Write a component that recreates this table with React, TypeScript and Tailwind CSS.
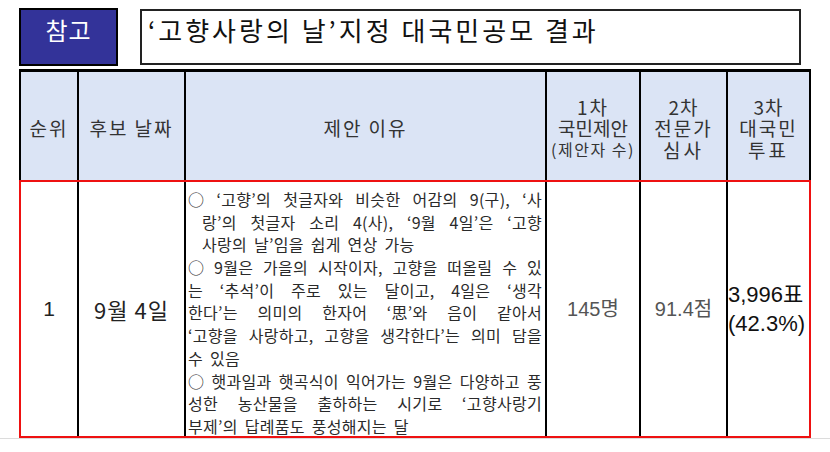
const kr = "font-['Noto_Sans_CJK_KR','Noto_Sans',sans-serif]";
const num = "font-['Liberation_Sans','Noto_Sans_CJK_KR',sans-serif]";

type L = { t: string; indent?: boolean; just?: boolean };

const lines: L[] = [
  { t: "○ ‘고향’의 첫글자와 비슷한 어감의 9(구), ‘사", just: true },
  { t: "랑’의 첫글자 소리 4(사), ‘9월 4일’은 ‘고향", indent: true, just: true },
  { t: "사랑의 날’임을 쉽게 연상 가능", indent: true },
  { t: "○ 9월은 가을의 시작이자, 고향을 떠올릴 수 있", just: true },
  { t: "는 ‘추석’이 주로 있는 달이고, 4일은 ‘생각", just: true },
  { t: "한다’는 의미의 한자어 ‘思’와 음이 같아서", just: true },
  { t: "‘고향을 사랑하고, 고향을 생각한다’는 의미 담을", just: true },
  { t: "수 있음" },
  { t: "○ 햇과일과 햇곡식이 익어가는 9월은 다양하고 풍", just: true },
  { t: "성한 농산물을 출하하는 시기로 ‘고향사랑기", just: true },
  { t: "부제’의 답례품도 풍성해지는 달" },
];

function Line({ t, indent, just }: L) {
  const words = t.split(" ");
  return (
    <div className={`h-[22.7px] leading-[22.7px] whitespace-nowrap tracking-[0.3px] ${indent ? "pl-[14px]" : ""} ${just ? "flex justify-between" : "[word-spacing:3px]"}`}>
      {just ? words.map((w, i) => <span key={i}>{w}</span>) : t}
    </div>
  );
}

export default function App() {
  return (
    <div className={`w-[830px] h-[452px] bg-white overflow-hidden ${kr}`}>
      <div className="flex pt-[8px] pl-[19px] gap-[22px] h-[69px]">
        <div className="w-[99px] h-[58px] bg-[#333399] border-2 border-black text-white text-[24px] leading-none flex justify-center pt-[8px] tracking-[1px]">
          참고
        </div>
        <div className="w-[661px] h-[56px] mt-[1px] border-2 border-[#222] text-[26px] leading-none pl-[6px] pt-[6px] text-[#111] tracking-[3px]">
          ‘고향사랑의 날’지정 대국민공모 결과
        </div>
      </div>

      <div className="ml-[19px] w-[792px]">
        <div className="flex h-[111px] border-t-[3px] border-black bg-[#dbe4f5] text-[#333] text-[19px] leading-[21.5px] text-center">
          <div className="w-[60px] border-l-2 border-r-2 border-black flex items-center justify-center tracking-[2px] pt-[4px]">순위</div>
          <div className="w-[107px] border-r-2 border-black flex items-center justify-center tracking-[2px] pt-[4px]">후보 날짜</div>
          <div className="w-[361px] border-r-2 border-black flex items-center justify-center tracking-[2px] pt-[4px]">제안 이유</div>
          <div className="w-[94px] border-r-2 border-black flex flex-col items-center justify-center pt-[4px]">
            <span className="tracking-[2px]">1차</span>
            <span>국민제안</span>
            <span className="text-[16px] tracking-[1.5px] whitespace-nowrap">(제안자 수)</span>
          </div>
          <div className="w-[87px] border-r-2 border-black flex flex-col items-center justify-center pt-[4px]">
            <span className="tracking-[1px]">2차</span>
            <span className="tracking-[2px]">전문가</span>
            <span className="tracking-[3px]">심사</span>
          </div>
          <div className="w-[83px] border-r-2 border-black flex flex-col items-center justify-center pt-[4px]">
            <span className="tracking-[1px]">3차</span>
            <span className="tracking-[2px]">대국민</span>
            <span className="tracking-[3px]">투표</span>
          </div>
        </div>

        <div className="flex h-[258px] border-y-2 border-[#ee1111]">
          <div className={`w-[60px] border-l-2 border-l-[#ee1111] border-r-2 border-black flex items-center justify-center text-[21px] text-[#222] ${num}`}>1</div>
          <div className="w-[107px] border-r-2 border-black flex items-center justify-center text-[22px] text-[#222] tracking-[1px]">9월 4일</div>
          <div className="w-[361px] border-r-2 border-black pl-[2px] pr-[3px] pt-[6px] text-[16px] text-[#2a2a2a]">
            {lines.map((l, i) => (
              <Line key={i} {...l} />
            ))}
          </div>
          <div className={`w-[94px] border-r-2 border-black flex items-center justify-center text-[20px] text-[#555] ${num}`}>145명</div>
          <div className={`w-[87px] border-r-2 border-black flex items-center justify-center text-[20px] text-[#555] ${num}`}>91.4점</div>
          <div className={`w-[83px] border-r-2 border-[#ee1111] flex flex-col justify-center text-[22px] leading-[29px] text-[#111] whitespace-nowrap ${num}`}>
            <span>3,996표</span>
            <span>(42.3%)</span>
          </div>
        </div>
      </div>
      <div className="h-px bg-[#dcdcdc]" />
    </div>
  );
}
